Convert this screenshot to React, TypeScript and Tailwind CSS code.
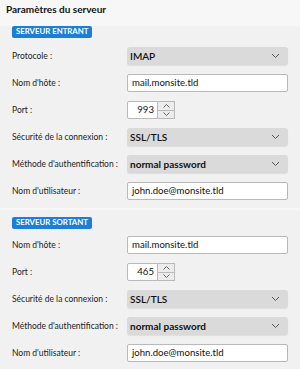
import React from "react";

const font = { fontFamily: 'Lato, "Noto Sans", sans-serif' };

function Chevron() {
  return (
    <svg width="9" height="6" viewBox="0 0 9 6" className="shrink-0">
      <path d="M1 1 L4.5 4.5 L8 1" fill="none" stroke="#555" strokeWidth="1" />
    </svg>
  );
}

function Label({ children }: { children: React.ReactNode }) {
  return <div className="w-[115px] shrink-0 whitespace-nowrap text-[8.5px] text-[#222]">{children}</div>;
}

function Select({ value, bold }: { value: string; bold?: boolean }) {
  return (
    <div className="flex h-[18px] w-[161px] items-center justify-between rounded-[3px] bg-[#dadada] pl-[3px] pr-[8px] shadow-[0_1px_1px_rgba(0,0,0,0.08)]">
      <span className={`whitespace-nowrap text-[10px] text-[#111] ${bold ? "font-bold" : "font-semibold"}`}>{value}</span>
      <Chevron />
    </div>
  );
}

function Input({ value }: { value: string }) {
  return (
    <div className="flex h-[18px] w-[161px] items-center rounded-[2px] border border-[#b9b9b9] bg-white px-[4px] text-[9.6px] text-[#111]">
      {value}
    </div>
  );
}

function Port({ value }: { value: string }) {
  return (
    <div className="flex h-[18px] items-stretch">
      <div className="flex w-[31px] items-center justify-end rounded-l-[2px] border border-[#b9b9b9] bg-white pr-[3px] text-[9.6px] text-[#111]">
        {value}
      </div>
      <div className="flex w-[17px] flex-col border border-l-0 border-[#b9b9b9] bg-[#ececec]">
        <div className="flex flex-1 items-center justify-center border-b border-[#b9b9b9]">
          <svg width="7" height="4" viewBox="0 0 7 4">
            <path d="M0.5 3.5 L3.5 0.5 L6.5 3.5" fill="none" stroke="#555" strokeWidth="0.9" />
          </svg>
        </div>
        <div className="flex flex-1 items-center justify-center">
          <svg width="7" height="4" viewBox="0 0 7 4">
            <path d="M0.5 0.5 L3.5 3.5 L6.5 0.5" fill="none" stroke="#555" strokeWidth="0.9" />
          </svg>
        </div>
      </div>
    </div>
  );
}

function Row({ label, children }: { label: string; children: React.ReactNode }) {
  return (
    <div className="flex h-[18px] items-center">
      <Label>{label}</Label>
      {children}
    </div>
  );
}

function Badge({ text }: { text: string }) {
  return (
    <div className="flex">
      <div className="flex h-[12px] items-center rounded-[2px] bg-[#1a7fd6] px-[4px] text-[7.8px] font-bold leading-none text-white">
        {text}
      </div>
    </div>
  );
}

export default function App() {
  return (
    <div className="h-[369px] w-[300px] overflow-hidden bg-[#f7f7f7]" style={font}>
      <div className="px-[6px] pt-[2px] text-[10px] font-bold leading-[14px] text-[#111]">Paramètres du serveur</div>
      <div className="mt-[10px] bg-[#f1f1f1] pb-[8px] pl-[12px] pr-[12px]">
        <Badge text="SERVEUR ENTRANT" />
        <div className="mt-[9px] flex flex-col gap-[9px]">
          <Row label="Protocole :">
            <Select value="IMAP" />
          </Row>
          <Row label="Nom d'hôte :">
            <Input value="mail.monsite.tld" />
          </Row>
          <Row label="Port :">
            <Port value="993" />
          </Row>
          <Row label="Sécurité de la connexion :">
            <Select value="SSL/TLS" />
          </Row>
          <Row label="Méthode d'authentification :">
            <Select value="normal password" bold />
          </Row>
          <Row label="Nom d'utilisateur :">
            <Input value="john.doe@monsite.tld" />
          </Row>
        </div>
      </div>
      <div className="mt-[2px] bg-[#f1f1f1] pb-[8px] pl-[12px] pr-[12px] pt-[7px]">
        <Badge text="SERVEUR SORTANT" />
        <div className="mt-[7px] flex flex-col gap-[9px]">
          <Row label="Nom d'hôte :">
            <Input value="mail.monsite.tld" />
          </Row>
          <Row label="Port :">
            <Port value="465" />
          </Row>
          <Row label="Sécurité de la connexion :">
            <Select value="SSL/TLS" />
          </Row>
          <Row label="Méthode d'authentification :">
            <Select value="normal password" bold />
          </Row>
          <Row label="Nom d'utilisateur :">
            <Input value="john.doe@monsite.tld" />
          </Row>
        </div>
      </div>
    </div>
  );
}
